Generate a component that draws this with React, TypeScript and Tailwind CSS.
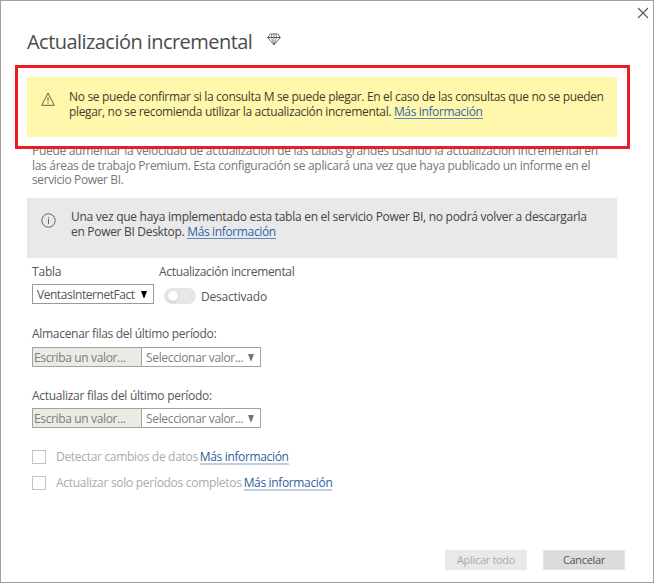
import type { ReactNode } from "react";

function Link({ children, soft = false }: { children: ReactNode; soft?: boolean }) {
  return (
    <a
      className={
        soft
          ? "inline-block h-[15px] border-b-2 border-[#c3cfe0] leading-[13px] tracking-[-0.35px] text-[#2f5f9b]"
          : "inline-block h-[15px] border-b border-[#5f8abf] leading-[15px] tracking-[-0.36px] text-[#2f67a8]"
      }
    >
      {children}
    </a>
  );
}

function DiamondIcon() {
  return (
    <svg width="14" height="13" viewBox="0 0 14 13" fill="none" stroke="#555" strokeWidth="0.9">
      <path d="M3.3 1H10.7L13.3 4.5L7 11.8L0.7 4.5Z" />
      <path d="M0.7 4.5H13.3" strokeWidth="1" />
      <path d="M4.8 1L4.4 4.5L7 11.8L9.6 4.5L9.2 1M7 1V11.8" strokeWidth="0.6" />
    </svg>
  );
}

function WarningIcon() {
  return (
    <svg width="14" height="14" viewBox="0 0 14 14" fill="none" stroke="#55532f" strokeWidth="0.9">
      <path d="M7 1L13.3 13.3H0.7Z" />
      <path d="M7 5V9.6M7 10.6V11.7" />
    </svg>
  );
}

function InfoIcon() {
  return (
    <svg width="15" height="15" viewBox="0 0 15 15" fill="none" stroke="#555" strokeWidth="0.9">
      <circle cx="7.5" cy="7.5" r="6.7" />
      <path d="M7.5 6V11M7.5 4V5.1" />
    </svg>
  );
}

function Caret({ dark = false }: { dark?: boolean }) {
  return (
    <svg width="6" height="7" viewBox="0 0 6 7" className={dark ? "shrink-0 fill-black" : "shrink-0 fill-[#777]"}>
      <path d="M0 0H6L3.4 7H2.6Z" />
    </svg>
  );
}

function PeriodFields() {
  return (
    <div className="flex h-5 w-[229px] text-[#7d7d7d]">
      <div className="flex w-[110px] items-center border border-[#a3a3a3] bg-[#ebebe4] pl-px tracking-[-0.36px]">
        Escriba un valor...
      </div>
      <div className="-ml-px flex w-[120px] items-center justify-between border border-[#a3a3a3] pl-1 pr-[6px] tracking-[-0.34px]">
        <span>Seleccionar valor...</span>
        <Caret />
      </div>
    </div>
  );
}

export default function App() {
  return (
    <div className="flex h-[583px] w-[654px] flex-col whitespace-nowrap border border-[#a0a0a0] bg-white font-['Open_Sans','Noto_Sans',sans-serif] text-[12px] leading-[15px] text-[#555]">
      <header className="flex h-16 justify-between">
        <div className="flex pl-[26px] pt-[27px]">
          <h1 className="text-[20px] leading-[28px] tracking-[-0.55px] text-[#4c4c4c]">Actualización incremental</h1>
          <div className="ml-[15px] mt-[5px]">
            <DiamondIcon />
          </div>
        </div>
        <svg className="mr-[4px] mt-[6px]" width="12" height="12" viewBox="0 0 12 12" stroke="#555" strokeWidth="1.1">
          <path d="M1 1L11 11M11 1L1 11" />
        </svg>
      </header>

      <section className="z-10 ml-[14px] h-[84px] w-[615px] shrink-0 border-3 border-[#ed1c24] bg-white p-[9px]">
        <div className="flex h-[60px] w-[590px] bg-[#fff7ac] pl-[14px] pt-[12px] text-[#3f3d2b]">
          <div className="mt-[3px] w-[28px]">
            <WarningIcon />
          </div>
          <div>
            <p><span className="tracking-[-0.33px]">No se puede confirmar si la consulta M se puede plegar. En el caso de las consultas que no se pueden</span></p>
            <p><span className="tracking-[-0.35px]">plegar, no se recomienda utilizar la actualización incremental. </span><Link>Más información</Link></p>
          </div>
        </div>
      </section>

      <div className="-mt-[5px] ml-[31px] h-[54px] leading-[14.5px] text-[#777]">
        <p><span className="tracking-[-0.295px]">Puede aumentar la velocidad de actualización de las tablas grandes usando la actualización incremental en</span></p>
        <p><span className="tracking-[-0.305px]">las áreas de trabajo Premium. Esta configuración se aplicará una vez que haya publicado un informe en el</span></p>
        <p><span className="tracking-[-0.38px]">servicio Power BI.</span></p>
      </div>

      <section className="ml-[26px] flex h-[60px] w-[590px] shrink-0 bg-[#e9e9e9] pl-[14px] pt-[11px] text-[#444]">
        <div className="mt-[4px] w-[30px]">
          <InfoIcon />
        </div>
        <div>
          <p><span className="tracking-[-0.275px]">Una vez que haya implementado esta tabla en el servicio Power BI, no podrá volver a descargarla</span></p>
          <p><span className="tracking-[-0.3px]">en Power BI Desktop. </span><Link>Más información</Link></p>
        </div>
      </section>

      <main className="flex flex-1 flex-col pl-[31px]">
        <div className="flex h-[68px] pt-[6px]">
          <div className="w-[127px]">
            <div className="tracking-[-0.2px]">Tabla</div>
            <div className="mt-[5px] flex h-5 w-[122px] items-center justify-between border border-[#999] pl-1 pr-[6px]">
              <span className="tracking-[-0.46px]">VentasInternetFact</span>
              <Caret dark />
            </div>
          </div>
          <div>
            <div className="tracking-[-0.32px]">Actualización incremental</div>
            <div className="ml-[5px] mt-[9px] flex items-center">
              <div className="flex h-4 w-8 items-center rounded-full bg-[#e6e6e6] pl-[4px]">
                <div className="size-[10px] rounded-full bg-white shadow-sm" />
              </div>
              <span className="ml-[5px] tracking-[-0.2px]">Desactivado</span>
            </div>
          </div>
        </div>

        <div className="h-[62px]">
          <div className="mb-[6px] tracking-[-0.3px]">Almacenar filas del último período:</div>
          <PeriodFields />
        </div>
        <div className="h-[62px]">
          <div className="mb-[5px] tracking-[-0.28px]">Actualizar filas del último período:</div>
          <PeriodFields />
        </div>

        <div className="flex h-[26px] leading-[13px] text-[#aaa]">
          <div className="mr-[10px] size-[14px] border border-[#c4c4c4]" />
          <span className="mr-[2px] tracking-[-0.31px]">Detectar cambios de datos</span>
          <Link soft>Más información</Link>
        </div>
        <div className="flex h-[26px] leading-[13px] text-[#aaa]">
          <div className="mr-[10px] size-[14px] border border-[#c4c4c4]" />
          <span className="mr-[2px] tracking-[-0.285px]">Actualizar solo períodos completos</span>
          <Link soft>Más información</Link>
        </div>
      </main>

      <footer className="mb-[12px] mr-[28px] flex h-5 justify-end gap-4 text-[11px] leading-5">
        <button className="h-5 w-[82px] bg-[#e9e9e9] tracking-[-0.32px] text-[#aaa]">Aplicar todo</button>
        <button className="flex h-5 w-[82px] items-center justify-center border border-[#e6e6e6] bg-[#dcdcdc] tracking-[-0.32px] text-[#555]">Cancelar</button>
      </footer>
    </div>
  );
}
